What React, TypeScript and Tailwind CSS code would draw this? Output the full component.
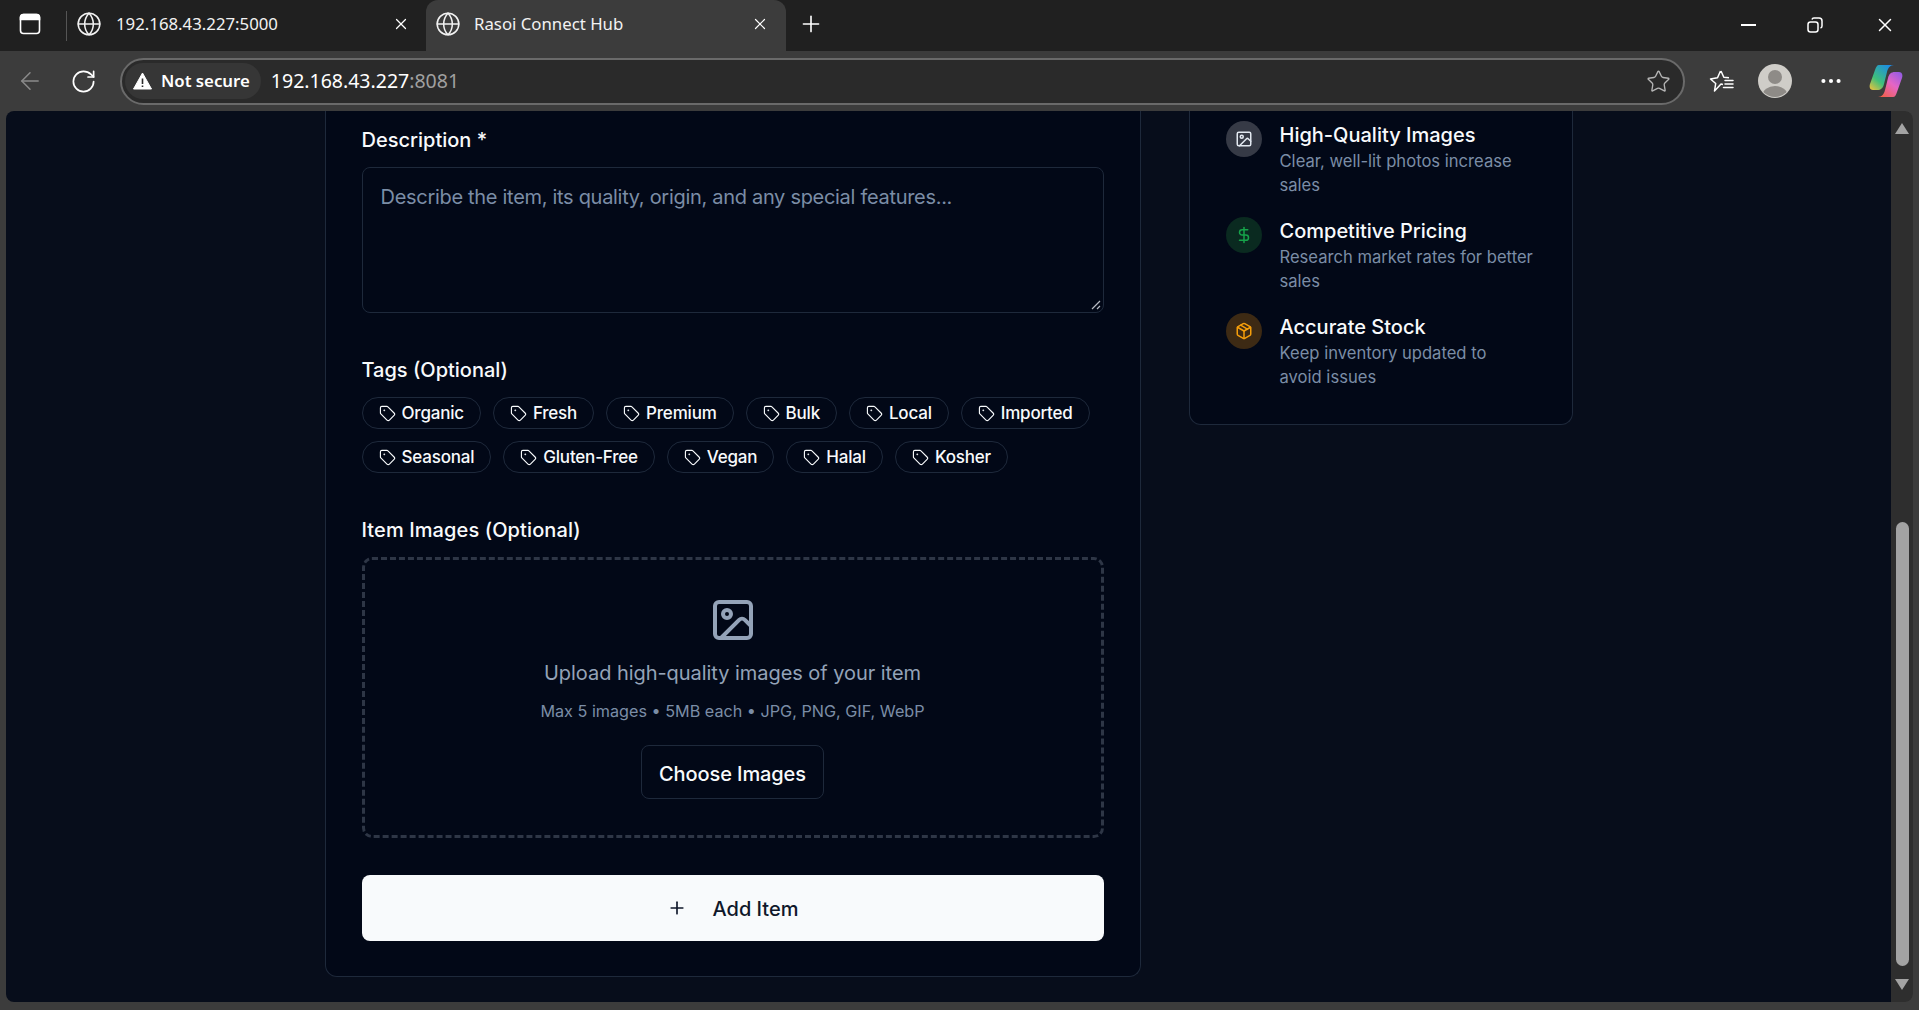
import { ArrowLeft, DollarSign, Globe, Image, MoreHorizontal, Package, Plus, RotateCw, Star, Tag, X } from "lucide-react";

const tagRows = [
  ["Organic", "Fresh", "Premium", "Bulk", "Local", "Imported"],
  ["Seasonal", "Gluten-Free", "Vegan", "Halal", "Kosher"],
];

const tips = [
  {
    title: "High-Quality Images",
    desc: "Clear, well-lit photos increase sales",
    icon: <Image size={18} className="text-[#e2e8f0]" />,
    bg: "bg-[#363a46]",
  },
  {
    title: "Competitive Pricing",
    desc: "Research market rates for better sales",
    icon: <DollarSign size={18} className="text-[#16a34a]" />,
    bg: "bg-[#0a2a20]",
  },
  {
    title: "Accurate Stock",
    desc: "Keep inventory updated to\navoid issues",
    icon: <Package size={18} className="text-[#f59e0b]" />,
    bg: "bg-[#3d2a14]",
  },
];

const TabsIcon = () => (
  <svg width="22" height="22" viewBox="0 0 22 22" fill="none" stroke="white" strokeWidth="1.6">
    <rect x="1.5" y="1.5" width="19" height="19" rx="3" />
    <path d="M1.5 6.5h19V4.5a3 3 0 0 0-3-3h-13a3 3 0 0 0-3 3z" fill="white" />
  </svg>
);

const RestoreIcon = () => (
  <svg width="16" height="16" viewBox="0 0 16 16" fill="none" stroke="white" strokeWidth="1.5">
    <rect x="1" y="5" width="10" height="10" rx="2.5" />
    <path d="M5 2.5A2 2 0 0 1 7 1h5a3 3 0 0 1 3 3v5a2 2 0 0 1-1.5 2" />
  </svg>
);

const FavoritesIcon = () => (
  <svg width="26" height="24" viewBox="0 0 26 24" fill="none" stroke="white" strokeWidth="1.5" strokeLinejoin="round">
    <path d="M12 2l2.8 6.2 5.2.6M14 15.500l-2-.5-6.500 7 1.200-7.500L1.500 10l7-1.200L11.500 2" />
    <path d="M16 11.500h8M16 15h8M14.500 18.500h9.500" strokeLinecap="round" />
  </svg>
);

const WarningIcon = () => (
  <svg width="19" height="18" viewBox="0 0 19 18">
    <path d="M9.500 1 18.500 17H.5z" fill="white" stroke="white" strokeLinejoin="round" />
    <path d="M9.500 6.500v5.500M9.500 13.500v1.500" stroke="#2a2a2a" strokeWidth="1.600" />
  </svg>
);

const ProfileIcon = () => (
  <svg width="34" height="34" viewBox="0 0 34 34">
    <circle cx="17" cy="17" r="17" fill="#cfcdc8" />
    <clipPath id="profile-clip">
      <circle cx="17" cy="17" r="16" />
    </clipPath>
    <g clipPath="url(#profile-clip)" fill="#8e8b87">
      <circle cx="17" cy="13" r="7" />
      <ellipse cx="17" cy="31" rx="12.500" ry="9" />
    </g>
  </svg>
);

const CopilotLogo = () => (
  <svg width="34" height="32" viewBox="0 0 34 32">
    <defs>
      <linearGradient id="copilot-left" x1="0" y1="1" x2="0.8" y2="0">
        <stop offset="0" stopColor="#f6c23a" />
        <stop offset="0.4" stopColor="#3fc07a" />
        <stop offset="1" stopColor="#1c8be8" />
      </linearGradient>
      <linearGradient id="copilot-right" x1="0.2" y1="1" x2="1" y2="0">
        <stop offset="0" stopColor="#f2604c" />
        <stop offset="0.5" stopColor="#e565c5" />
        <stop offset="1" stopColor="#8b5be8" />
      </linearGradient>
    </defs>
    <path d="M10 0h15c-4 0-6 3-7 7l-3 12c-1 4-3 6-7 6H4c-3 0-4-3-3-6L6 5c1-3 2-5 4-5z" fill="url(#copilot-left)" />
    <path d="M24 32H9c4 0 6-3 7-7l3-12c1-4 3-6 7-6h4c3 0 4 3 3 6l-5 14c-1 3-2 5-4 5z" fill="url(#copilot-right)" />
  </svg>
);

const BrowserTab = ({ title, active }: { title: string; active?: boolean }) => (
  <div
    className={
      active
        ? "flex h-[51px] w-[360px] items-center rounded-t-xl bg-[#3c3c3c] pb-[3px] pl-[9px] pr-[17px]"
        : "flex h-[51px] w-[359px] items-center pb-[3px] pl-[9px] pr-[16px]"
    }
  >
    <Globe size={26} strokeWidth={1.4} className="shrink-0 text-[#f2f2f2]" />
    <span className={active ? "ml-[13px] flex-1 text-[16.800px] text-[#f2f2f2]" : "ml-[14px] flex-1 text-[16.800px] text-[#f2f2f2]"}>{title}</span>
    <X size={18} strokeWidth={1.6} className="text-white" />
  </div>
);

function BrowserChrome() {
  return (
    <div className="font-['Noto_Sans',sans-serif]">
      <div className="flex h-[51px] items-center bg-[#202020]">
        <div className="ml-[19px] flex w-[47px] items-center pb-[3px]">
          <TabsIcon />
        </div>
        <div className="h-[30px] w-px bg-[#555555]" />
        <BrowserTab title="192.168.43.227:5000" />
        <BrowserTab title="Rasoi Connect Hub" active />
        <Plus size={26} strokeWidth={1.5} className="ml-[12px] mb-[3px] text-white" />
        <div className="ml-auto flex items-center pb-[2px]">
          <div className="mr-[51px] h-[2px] w-[15px] bg-white" />
          <div className="mr-[51px]">
            <RestoreIcon />
          </div>
          <X size={22} strokeWidth={1.6} className="mr-[23px] text-white" />
        </div>
      </div>
      <div className="flex h-[60px] items-center bg-[#3c3c3c]">
        <ArrowLeft size={28} strokeWidth={1.3} className="ml-[16px] text-[#8a8a8a]" />
        <RotateCw size={27} strokeWidth={1.5} className="ml-[26px] text-white" />
        <div className="ml-[23px] flex h-[47px] w-[1565px] items-center rounded-full border-2 border-[#6a6a6a] bg-[#2a2a2a] pl-[3px] pr-[12px]">
          <div className="flex h-[36px] items-center rounded-full bg-[#363636] pl-[8px] pr-[11px]">
            <WarningIcon />
            <span className="ml-[9px] text-[16.800px] font-semibold text-white">Not secure</span>
          </div>
          <span className="ml-[10px] text-[19.500px] text-white">
            192.168.43.227<span className="text-[#a0a0a0]">:8081</span>
          </span>
          <Star size={25} strokeWidth={1.3} className="ml-auto text-[#b5b5b5]" />
        </div>
        <div className="ml-[24px]">
          <FavoritesIcon />
        </div>
        <div className="ml-[23px]">
          <ProfileIcon />
        </div>
        <MoreHorizontal size={26} strokeWidth={1.8} className="ml-[26px] text-white" />
        <div className="ml-[25px]">
          <CopilotLogo />
        </div>
      </div>
    </div>
  );
}

const Scrollbar = () => (
  <div className="flex w-[22px] shrink-0 flex-col items-center rounded-tr-lg rounded-br-lg bg-[#2e2e2e]">
    <div className="mt-[12px] h-0 w-0 border-x-[7px] border-b-[11px] border-x-transparent border-b-[#a3a3a3]" />
    <div className="mt-[388px] h-[444px] w-[13px] rounded-full bg-[#a3a3a3]" />
    <div className="mt-[13px] h-0 w-0 border-x-[7px] border-t-[11px] border-x-transparent border-t-[#a3a3a3]" />
  </div>
);

const TagPill = ({ label }: { label: string }) => (
  <span className="flex h-[32px] items-center gap-[6px] rounded-full border border-[#1e293b] px-[16px] pt-[1px] text-[17px] font-medium tracking-[-0.2px] text-[#f8fafc]">
    <Tag size={17} strokeWidth={1.6} />
    {label}
  </span>
);

function ItemForm() {
  return (
    <div className="col-span-2 rounded-b-xl border-x border-b border-[#1e293b] bg-[#020817] px-[36px] pb-[35px] pt-[17px]">
      <p className="text-[20px] font-medium leading-[24px] text-[#f8fafc]">Description *</p>
      <div className="relative mt-[15px] h-[146px] rounded-lg border border-[#1e293b] px-[18px] py-[15px] text-[20px] leading-[28px] tracking-[-0.3px] text-[#7b8da6]">
        Describe the item, its quality, origin, and any special features...
        <svg width="10" height="10" viewBox="0 0 10 10" className="absolute bottom-[2px] right-[2px]" stroke="#b8bcc4" strokeWidth="1.200">
          <path d="M9 1 1 9M9 6 6 9" />
        </svg>
      </div>

      <p className="mt-[45px] text-[20px] font-medium leading-[24px] text-[#f8fafc]">Tags (Optional)</p>
      <div className="mt-[15px] flex flex-col gap-[12px]">
        {tagRows.map((row) => (
          <div key={row[0]} className="flex gap-[12px]">
            {row.map((tag) => (
              <TagPill key={tag} label={tag} />
            ))}
          </div>
        ))}
      </div>

      <p className="mt-[45px] text-[20px] font-medium leading-[24px] tracking-[0.1px] text-[#f8fafc]">Item Images (Optional)</p>
      <div className="mt-[15px] flex h-[281px] flex-col items-center rounded-[10px] border-[3px] border-dashed border-[#2e3646] pt-[36px]">
        <Image size={48} strokeWidth={2} className="text-[#94a3b8]" />
        <p className="mt-[15px] text-[20px] leading-[28px] tracking-[-0.05px] text-[#94a3b8]">Upload high-quality images of your item</p>
        <p className="mt-[12px] text-[16.200px] leading-[24px] text-[#7b8da6]">Max 5 images • 5MB each • JPG, PNG, GIF, WebP</p>
        <button className="mt-[22px] h-[54px] w-[183px] rounded-lg border border-[#1e293b] pt-[3px] text-[20px] font-medium tracking-[-0.1px] text-[#f8fafc]">
          Choose Images
        </button>
      </div>

      <button className="mt-[37px] flex h-[66px] w-full items-center justify-center gap-[26px] rounded-lg bg-[#f8fafc] pt-[2px] text-[20px] font-medium text-[#0f172a]">
        <Plus size={20} className="mb-[2px]" />
        Add Item
      </button>
    </div>
  );
}

function TipsCard() {
  return (
    <div className="self-start rounded-b-xl border-x border-b border-[#1e293b] bg-[#020817] px-[36px] pb-[35px] pt-[10px]">
      <div className="flex flex-col gap-[20px]">
        {tips.map((tip) => (
          <div key={tip.title} className="flex gap-[18px]">
            <div className={`flex h-[36px] w-[36px] shrink-0 items-center justify-center rounded-full ${tip.bg}`}>{tip.icon}</div>
            <div>
              <p className="text-[20px] font-medium leading-[28px] text-[#f8fafc]">{tip.title}</p>
              <p className="whitespace-pre-line text-[16.600px] leading-[24px] text-[#7b8da6]">{tip.desc}</p>
            </div>
          </div>
        ))}
      </div>
    </div>
  );
}

export default function App() {
  return (
    <div className="flex h-[1010px] w-[1919px] flex-col overflow-hidden bg-[#3c3c3c] font-['Inter',sans-serif]">
      <BrowserChrome />
      <div className="mx-[6px] flex h-[891px] overflow-hidden rounded-t-lg rounded-b-lg">
        <main className="flex-1 overflow-hidden bg-[#070d1b]">
          <div className="mx-auto grid max-w-[1248px] grid-cols-3 gap-12">
            <ItemForm />
            <TipsCard />
          </div>
        </main>
        <Scrollbar />
      </div>
    </div>
  );
}
